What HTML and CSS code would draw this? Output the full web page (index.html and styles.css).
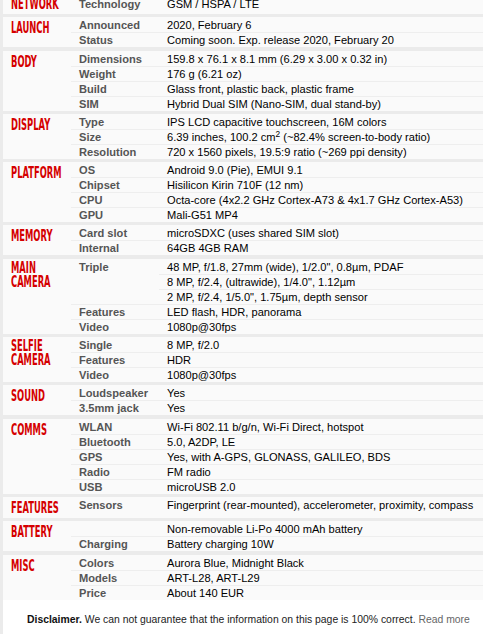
FILE: index.html
```html
<!DOCTYPE html>
<html lang="en">
<head>
<meta charset="utf-8">
<title>Specs</title>
<link rel="stylesheet" href="styles.css">
</head>
<body>
<div class="page">
  <section class="sec">
    <div class="sec-h"><span>Network</span></div>
    <div class="rows">
      <div class="row net"><div class="ttl">Technology</div><div class="nfo">GSM / HSPA / LTE</div></div>
    </div>
  </section>
  <section class="sec">
    <div class="sec-h"><span>Launch</span></div>
    <div class="rows">
      <div class="row"><div class="ttl">Announced</div><div class="nfo">2020, February 6</div></div>
      <div class="row"><div class="ttl">Status</div><div class="nfo">Coming soon. Exp. release 2020, February 20</div></div>
    </div>
  </section>
  <section class="sec">
    <div class="sec-h"><span>Body</span></div>
    <div class="rows">
      <div class="row"><div class="ttl">Dimensions</div><div class="nfo">159.8 x 76.1 x 8.1 mm (6.29 x 3.00 x 0.32 in)</div></div>
      <div class="row"><div class="ttl">Weight</div><div class="nfo">176 g (6.21 oz)</div></div>
      <div class="row"><div class="ttl">Build</div><div class="nfo">Glass front, plastic back, plastic frame</div></div>
      <div class="row"><div class="ttl">SIM</div><div class="nfo">Hybrid Dual SIM (Nano-SIM, dual stand-by)</div></div>
    </div>
  </section>
  <section class="sec">
    <div class="sec-h"><span>Display</span></div>
    <div class="rows">
      <div class="row"><div class="ttl">Type</div><div class="nfo">IPS LCD capacitive touchscreen, 16M colors</div></div>
      <div class="row"><div class="ttl">Size</div><div class="nfo">6.39 inches, 100.2 cm<sup>2</sup> (~82.4% screen-to-body ratio)</div></div>
      <div class="row"><div class="ttl">Resolution</div><div class="nfo">720 x 1560 pixels, 19.5:9 ratio (~269 ppi density)</div></div>
    </div>
  </section>
  <section class="sec">
    <div class="sec-h"><span>Platform</span></div>
    <div class="rows">
      <div class="row"><div class="ttl">OS</div><div class="nfo">Android 9.0 (Pie), EMUI 9.1</div></div>
      <div class="row"><div class="ttl">Chipset</div><div class="nfo">Hisilicon Kirin 710F (12 nm)</div></div>
      <div class="row"><div class="ttl">CPU</div><div class="nfo">Octa-core (4x2.2 GHz Cortex-A73 &amp; 4x1.7 GHz Cortex-A53)</div></div>
      <div class="row"><div class="ttl">GPU</div><div class="nfo">Mali-G51 MP4</div></div>
    </div>
  </section>
  <section class="sec">
    <div class="sec-h"><span>Memory</span></div>
    <div class="rows">
      <div class="row"><div class="ttl">Card slot</div><div class="nfo">microSDXC (uses shared SIM slot)</div></div>
      <div class="row"><div class="ttl">Internal</div><div class="nfo">64GB 4GB RAM</div></div>
    </div>
  </section>
  <section class="sec">
    <div class="sec-h two"><span>Main Camera</span></div>
    <div class="rows">
      <div class="row"><div class="ttl">Triple</div><div class="nfo">48 MP, f/1.8, 27mm (wide), 1/2.0", 0.8µm, PDAF</div></div>
      <div class="row cont"><div class="ttl"></div><div class="nfo">8 MP, f/2.4, (ultrawide), 1/4.0", 1.12µm</div></div>
      <div class="row cont"><div class="ttl"></div><div class="nfo">2 MP, f/2.4, 1/5.0", 1.75µm, depth sensor</div></div>
      <div class="row"><div class="ttl">Features</div><div class="nfo">LED flash, HDR, panorama</div></div>
      <div class="row"><div class="ttl">Video</div><div class="nfo">1080p@30fps</div></div>
    </div>
  </section>
  <section class="sec">
    <div class="sec-h two"><span>Selfie Camera</span></div>
    <div class="rows">
      <div class="row"><div class="ttl">Single</div><div class="nfo">8 MP, f/2.0</div></div>
      <div class="row"><div class="ttl">Features</div><div class="nfo">HDR</div></div>
      <div class="row"><div class="ttl">Video</div><div class="nfo">1080p@30fps</div></div>
    </div>
  </section>
  <section class="sec">
    <div class="sec-h"><span>Sound</span></div>
    <div class="rows">
      <div class="row"><div class="ttl">Loudspeaker</div><div class="nfo">Yes</div></div>
      <div class="row"><div class="ttl">3.5mm jack</div><div class="nfo">Yes</div></div>
    </div>
  </section>
  <section class="sec">
    <div class="sec-h"><span>Comms</span></div>
    <div class="rows">
      <div class="row"><div class="ttl">WLAN</div><div class="nfo">Wi-Fi 802.11 b/g/n, Wi-Fi Direct, hotspot</div></div>
      <div class="row"><div class="ttl">Bluetooth</div><div class="nfo">5.0, A2DP, LE</div></div>
      <div class="row"><div class="ttl">GPS</div><div class="nfo">Yes, with A-GPS, GLONASS, GALILEO, BDS</div></div>
      <div class="row"><div class="ttl">Radio</div><div class="nfo">FM radio</div></div>
      <div class="row"><div class="ttl">USB</div><div class="nfo">microUSB 2.0</div></div>
    </div>
  </section>
  <section class="sec">
    <div class="sec-h"><span>Features</span></div>
    <div class="rows">
      <div class="row"><div class="ttl">Sensors</div><div class="nfo">Fingerprint (rear-mounted), accelerometer, proximity, compass</div></div>
    </div>
  </section>
  <section class="sec">
    <div class="sec-h"><span>Battery</span></div>
    <div class="rows">
      <div class="row"><div class="ttl"></div><div class="nfo">Non-removable Li-Po 4000 mAh battery</div></div>
      <div class="row"><div class="ttl">Charging</div><div class="nfo">Battery charging 10W</div></div>
    </div>
  </section>
  <section class="sec last">
    <div class="sec-h"><span>Misc</span></div>
    <div class="rows">
      <div class="row"><div class="ttl">Colors</div><div class="nfo">Aurora Blue, Midnight Black</div></div>
      <div class="row"><div class="ttl">Models</div><div class="nfo">ART-L28, ART-L29</div></div>
      <div class="row"><div class="ttl">Price</div><div class="nfo">About 140 EUR</div></div>
    </div>
  </section>
  <div class="disclaimer"><b>Disclaimer.</b> We can not guarantee that the information on this page is 100% correct. <a class="more">Read more</a></div>
</div>
</body>
</html>
```
FILE: styles.css
```css
html, body {
  margin: 0;
  padding: 0;
}
body {
  background: #ebebeb;
  font-family: "Liberation Sans", Arial, sans-serif;
  overflow: hidden;
}
.page {
  margin-left: 3px;
  margin-top: -7px;
}
.sec {
  display: grid;
  grid-template-columns: 68px 1fr;
  background: #fafafa;
  margin-bottom: 3.3px;
}
.sec.last {
  margin-bottom: 0;
}
.sec-h {
  padding: 4px 0 3px 8px;
  font-family: "DejaVu Sans Condensed", "DejaVu Sans", sans-serif;
  font-weight: bold;
  font-size: 15px;
  line-height: 14px;
  color: #d50000;
  text-transform: uppercase;
}
.sec-h.two {
  padding-top: 2px;
}
.sec-h span {
  display: inline-block;
  width: 92px;
  transform: scaleX(0.62);
  transform-origin: 0 0;
}
.row {
  display: grid;
  grid-template-columns: 88px 1fr;
  font-size: 11.1px;
  line-height: 14px;
}
.ttl, .nfo {
  border-top: 1px solid #eeeeee;
  white-space: nowrap;
}
.row:first-child > .ttl,
.row:first-child > .nfo,
.row.cont > .ttl {
  border-top-color: transparent;
}
.row.net > .ttl,
.row.net > .nfo {
  padding-top: 3px;
}
.ttl {
  padding-left: 8px;
  font-weight: bold;
  color: #555;
}
.nfo {
  padding-left: 8px;
  color: #000;
}
sup {
  font-size: 0.75em;
  line-height: 0;
  vertical-align: 0.45em;
}
.disclaimer {
  background: #fff;
  padding: 13px 0 30px 24px;
  font-size: 10.4px;
  line-height: 14px;
  color: #222;
}
.disclaimer b {
  color: #111;
}
.more {
  color: #666;
}
```
